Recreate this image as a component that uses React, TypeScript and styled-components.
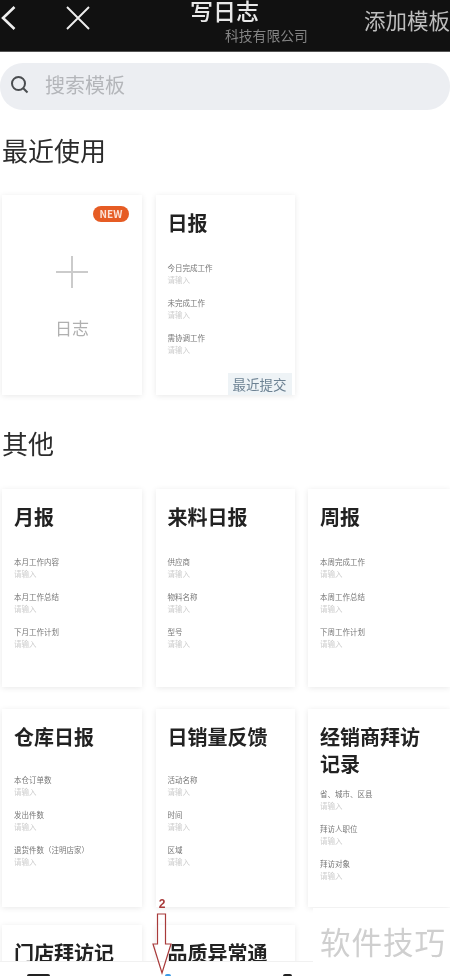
import styled, { createGlobalStyle } from "styled-components";

const GlobalStyle = createGlobalStyle`
  html, body {
    margin: 0;
    padding: 0;
    background: #fff;
  }
  body {
    font-family: "Noto Sans CJK SC", "Noto Sans", sans-serif;
  }
`;

const Page = styled.div`
  position: relative;
  width: 450px;
  height: 976px;
  overflow: hidden;
  background: #fff;
  filter: blur(0.4px);
`;

const Header = styled.header`
  display: grid;
  grid-template-columns: 190px 120px 1fr;
  height: 51px;
  background: #111;
  border-bottom: 1px solid #555;
  color: #fff;
  overflow: hidden;
`;

const NavIcons = styled.div`
  display: flex;
  align-items: center;
  gap: 49px;
  padding: 0 0 15px 0;
  color: #eee;
`;

const TitleBlock = styled.div`
  display: flex;
  flex-direction: column;
  white-space: nowrap;
`;

const Title = styled.div`
  font-size: 23px;
  line-height: 26px;
  font-weight: 500;
  margin-top: -3px;
  color: #e8e8e8;
`;

const Company = styled.div`
  font-size: 13.8px;
  line-height: 18px;
  margin: 3px 0 0 35px;
  color: #858585;
`;

const AddTemplate = styled.div`
  font-size: 21.5px;
  line-height: 40px;
  padding-left: 54px;
  color: #bdbdbd;
  white-space: nowrap;
`;

const SearchBar = styled.div`
  display: flex;
  align-items: center;
  gap: 16px;
  box-sizing: border-box;
  height: 47px;
  margin-top: 11px;
  padding: 0 0 4px 10px;
  border-radius: 23px;
  background: #eceef2;
  color: #4a4d50;
`;

const Placeholder = styled.span`
  font-size: 20px;
  color: #b4b6ba;
`;

const SectionTitle = styled.h2<{ $top: number }>`
  margin: ${(p) => p.$top}px 0 0 2px;
  font-size: 26px;
  line-height: 36px;
  font-weight: 400;
  color: #2c2c2c;
`;

const CardGrid = styled.div<{ $top: number }>`
  display: grid;
  grid-template-columns: 140px 139px 142px;
  column-gap: 13.5px;
  row-gap: 22px;
  margin: ${(p) => p.$top}px 0 0 2px;
`;

const Card = styled.div<{ $height?: number; $pull?: number }>`
  position: relative;
  box-sizing: border-box;
  height: ${(p) => p.$height ?? 198}px;
  margin-top: ${(p) => -(p.$pull ?? 0)}px;
  padding: 14px 12px 0;
  background: #fff;
  box-shadow: 0 1px 6px rgba(0, 0, 0, 0.09);
`;

const NewCard = styled(Card)`
  display: flex;
  flex-direction: column;
  align-items: center;
  padding: 0;
  color: #b0b0b0;
`;

const NewBadge = styled.span`
  position: absolute;
  top: 11px;
  right: 13px;
  width: 36px;
  height: 16px;
  border-radius: 8px;
  background: #e65c24;
  color: #fbe3d8;
  font-size: 10px;
  font-weight: 700;
  line-height: 16px;
  text-align: center;
`;

const PlusIcon = styled.svg`
  margin-top: 60px;
  color: #cbcbcb;
`;

const NewLabel = styled.div`
  margin-top: 27px;
  font-size: 17px;
  line-height: 24px;
`;

const CardTitle = styled.div<{ $gap?: number }>`
  margin-bottom: ${(p) => p.$gap ?? 26}px;
  font-size: 20px;
  line-height: 27px;
  font-weight: 700;
  color: #222;
`;

const Field = styled.div`
  height: 35px;
  filter: blur(0.35px);
`;

const FieldLabel = styled.div`
  font-size: 7.5px;
  line-height: 12px;
  color: #777;
  white-space: nowrap;
`;

const FieldHint = styled.div`
  font-size: 7.5px;
  line-height: 12px;
  color: #cdcdcd;
`;

const RecentTag = styled.span`
  position: absolute;
  right: 3px;
  bottom: 0;
  padding: 0 5px;
  height: 22px;
  background: #eef3f6;
  color: #6d8293;
  font-size: 13.5px;
  line-height: 22px;
`;

const BottomBar = styled.div`
  position: absolute;
  left: 0;
  bottom: 0;
  width: 313px;
  height: 14px;
  background: #fff;
  border-top: 1px solid #f1f1f1;
`;

const TabMark = styled.span<{ $left: number; $width: number; $color: string }>`
  position: absolute;
  left: ${(p) => p.$left}px;
  bottom: 0;
  width: ${(p) => p.$width}px;
  height: 2px;
  border-radius: 2px 2px 0 0;
  background: ${(p) => p.$color};
`;

const Watermark = styled.div`
  position: absolute;
  right: 0;
  top: 908px;
  width: 137px;
  height: 68px;
  padding-left: 7px;
  box-sizing: border-box;
  background: #fff;
  color: #cfcfcf;
  font-size: 30.5px;
  line-height: 66px;
  letter-spacing: 1px;
  white-space: nowrap;
`;

const Annotation = styled.div`
  position: absolute;
  left: 151px;
  top: 897px;
  width: 22px;
  height: 79px;
  color: #a83a3a;
  text-align: center;
`;

const AnnotationNumber = styled.div`
  font-family: "Liberation Sans", sans-serif;
  font-size: 12px;
  line-height: 14px;
  font-weight: 700;
`;

type Template = { title: string; fields: string[]; gap?: number; pull?: number };

const templates: Template[] = [
  { title: "月报", fields: ["本月工作内容", "本月工作总结", "下月工作计划"] },
  { title: "来料日报", fields: ["供应商", "物料名称", "型号"] },
  { title: "周报", fields: ["本周完成工作", "本周工作总结", "下周工作计划"] },
  { title: "仓库日报", fields: ["本仓订单数", "发出件数", "退货件数（注明店家）"], gap: 24 },
  { title: "日销量反馈", fields: ["活动名称", "时间", "区域"], gap: 24 },
  { title: "经销商拜访记录", fields: ["省、城市、区县", "拜访人职位", "拜访对象"], gap: 11 },
  { title: "门店拜访记录", fields: [], pull: 4 },
  { title: "品质异常通知", fields: [], pull: 4 },
];

function TemplateCard({ title, fields, gap, pull }: Template) {
  return (
    <Card $pull={pull}>
      <CardTitle $gap={gap}>{title}</CardTitle>
      {fields.map((f) => (
        <Field key={f}>
          <FieldLabel>{f}</FieldLabel>
          <FieldHint>请输入</FieldHint>
        </Field>
      ))}
    </Card>
  );
}

export default function App() {
  return (
    <Page>
      <GlobalStyle />
      <Header>
        <NavIcons>
          <svg width="16" height="26" viewBox="0 0 16 26" fill="none" stroke="currentColor" strokeWidth="2.6">
            <path d="M14.5 2 L3 13 L14.5 24" />
          </svg>
          <svg width="26" height="26" viewBox="0 0 26 26" fill="none" stroke="currentColor" strokeWidth="1.9">
            <path d="M2 2 L24 24 M24 2 L2 24" />
          </svg>
        </NavIcons>
        <TitleBlock>
          <Title>写日志</Title>
          <Company>科技有限公司</Company>
        </TitleBlock>
        <AddTemplate>添加模板</AddTemplate>
      </Header>

      <SearchBar>
        <svg width="19" height="19" viewBox="0 0 19 19" fill="none" stroke="currentColor" strokeWidth="2">
          <circle cx="8.5" cy="8.5" r="6.5" />
          <path d="M13.2 13.2 L17.5 17.5" />
        </svg>
        <Placeholder>搜索模板</Placeholder>
      </SearchBar>

      <SectionTitle $top={22}>最近使用</SectionTitle>
      <CardGrid $top={27}>
        <NewCard $height={200}>
          <NewBadge>NEW</NewBadge>
          <PlusIcon width="34" height="34" viewBox="0 0 34 34" stroke="currentColor" strokeWidth="2">
            <path d="M17 1 V33 M1 17 H33" />
          </PlusIcon>
          <NewLabel>日志</NewLabel>
        </NewCard>
        <Card $height={200}>
          <CardTitle>日报</CardTitle>
          {["今日完成工作", "未完成工作", "需协调工作"].map((f) => (
            <Field key={f}>
              <FieldLabel>{f}</FieldLabel>
              <FieldHint>请输入</FieldHint>
            </Field>
          ))}
          <RecentTag>最近提交</RecentTag>
        </Card>
      </CardGrid>

      <SectionTitle $top={30}>其他</SectionTitle>
      <CardGrid $top={28}>
        {templates.map((t) => (
          <TemplateCard key={t.title} {...t} />
        ))}
      </CardGrid>

      <BottomBar>
        <TabMark $left={27} $width={23} $color="#222" />
        <TabMark $left={165} $width={6} $color="#3a9be8" />
        <TabMark $left={283} $width={9} $color="#222" />
      </BottomBar>
      <Watermark>软件技巧</Watermark>
      <Annotation>
        <AnnotationNumber>2</AnnotationNumber>
        <svg width="22" height="65" viewBox="0 0 22 65" fill="none" stroke="currentColor" strokeWidth="1.2">
          <path d="M6.5 3 H14.5 V33 H20 L11 62 L2 33 H6.5 Z" />
        </svg>
      </Annotation>
    </Page>
  );
}
